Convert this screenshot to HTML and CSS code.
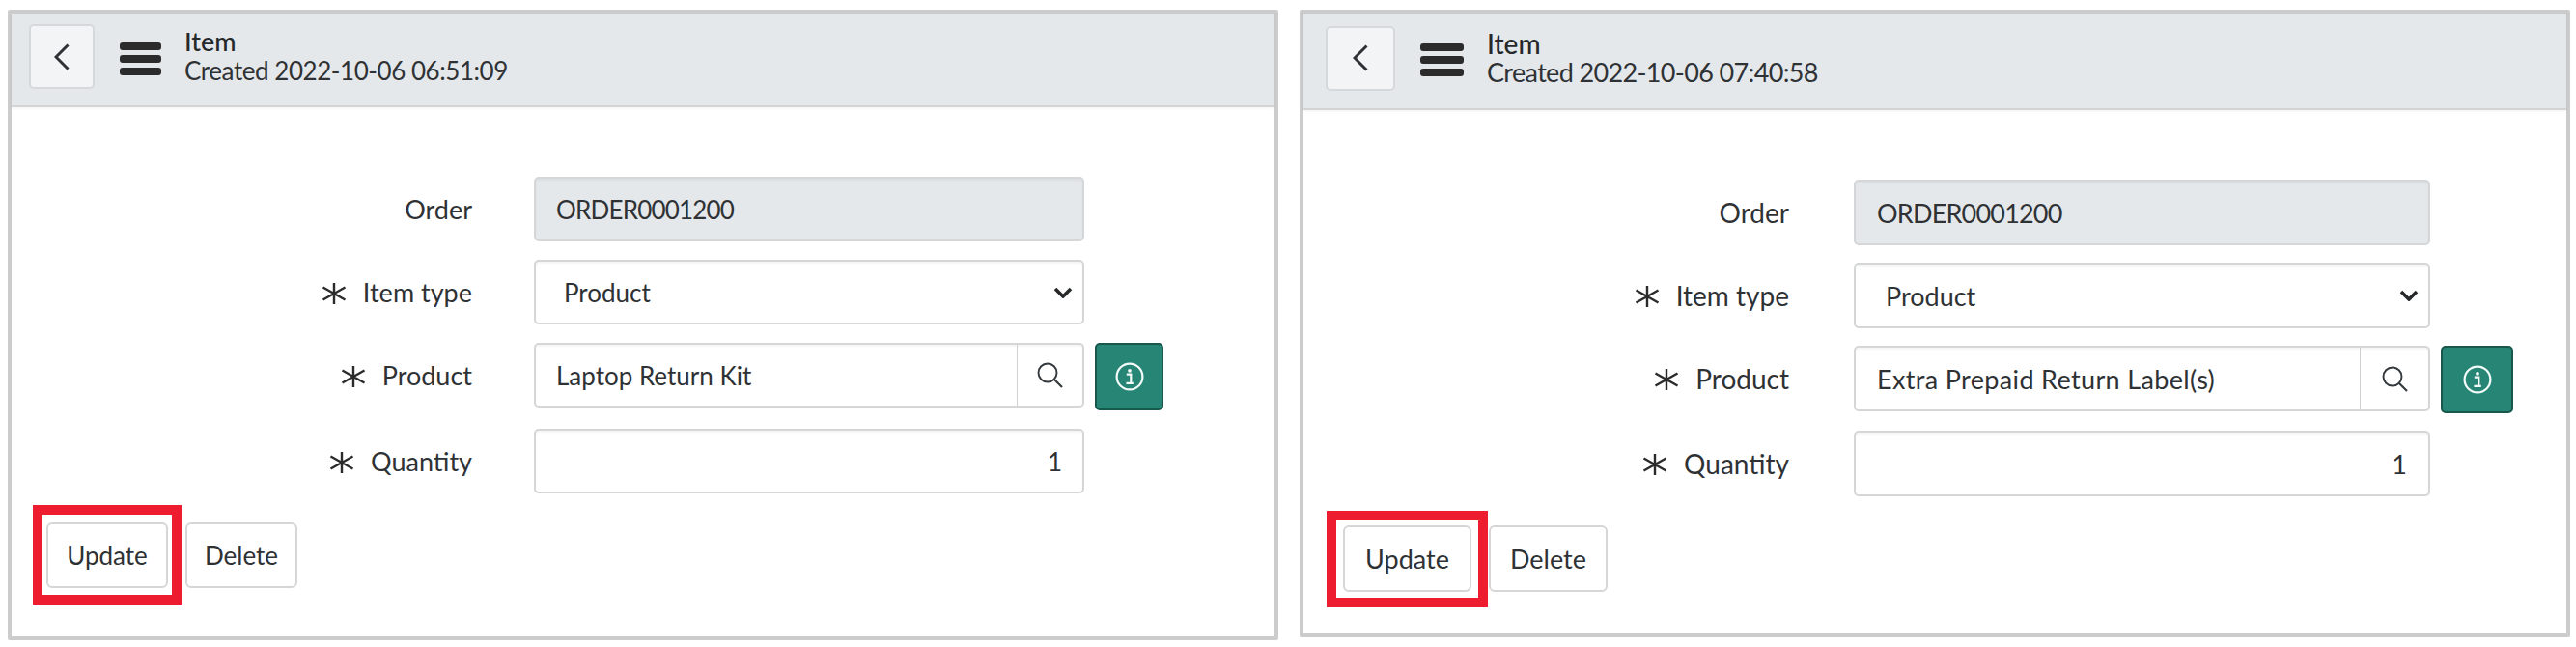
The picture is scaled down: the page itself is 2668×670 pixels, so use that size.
FILE: index.html
```html
<!DOCTYPE html>
<html lang="en">
<head>
    <meta charset="UTF-8">
    <meta name="viewport" content="width=device-width, initial-scale=1.0">
    <title>Item</title>
    <link rel="stylesheet" href="styles.css">
</head>
<body>
    <svg class="icon-defs" aria-hidden="true">
        <symbol id="i-back" viewBox="0 0 16 28"><path d="M14.5 1.5 2 14l12.5 12.5" fill="none" stroke="currentColor" stroke-width="3"/></symbol>
        <symbol id="i-star" viewBox="0 0 26 22"><path d="M13 0v22M1.5 4.5l23 13M24.5 4.5l-23 13" fill="none" stroke="currentColor" stroke-width="2.4"/></symbol>
        <symbol id="i-chevron" viewBox="0 0 20 12"><path d="M2 2l8 8 8-8" fill="none" stroke="currentColor" stroke-width="3.6"/></symbol>
        <symbol id="i-search" viewBox="0 0 27 27"><circle cx="11" cy="11" r="9.5" fill="none" stroke="currentColor" stroke-width="1.9"/><path d="M18 18l8 8" fill="none" stroke="currentColor" stroke-width="2.2"/></symbol>
        <symbol id="i-info" viewBox="0 0 30 30"><circle cx="15" cy="15" r="13.4" fill="none" stroke="currentColor" stroke-width="2.2"/><circle cx="15" cy="8.8" r="1.9" fill="currentColor"/><path d="M11.8 12.6h4.5v9.2h2.4M11.4 21.8h7.4" fill="none" stroke="currentColor" stroke-width="2.2"/></symbol>
    </svg>

    <div class="panel panel-a">
        <div class="panel-head">
            <button class="back-btn"><svg class="back-icon"><use href="#i-back"/></svg></button>
            <div class="menu-bars"><span></span><span></span><span></span></div>
            <div class="head-text">
                <div class="head-title">Item</div>
                <div class="head-date">Created 2022-10-06 06:51:09</div>
            </div>
        </div>
        <div class="form">
            <div class="form-row">
                <div class="form-label">Order</div>
                <div class="field field-readonly">ORDER0001200</div>
            </div>
            <div class="form-row">
                <div class="form-label"><svg class="star"><use href="#i-star"/></svg>Item type</div>
                <div class="field field-select">Product<svg class="chevron"><use href="#i-chevron"/></svg></div>
            </div>
            <div class="form-row">
                <div class="form-label"><svg class="star"><use href="#i-star"/></svg>Product</div>
                <div class="field field-lookup">
                    <div class="lookup-value">Laptop Return Kit</div>
                    <div class="lookup-btn"><svg class="search-icon"><use href="#i-search"/></svg></div>
                </div>
                <button class="info-btn"><svg class="info-icon"><use href="#i-info"/></svg></button>
            </div>
            <div class="form-row">
                <div class="form-label"><svg class="star"><use href="#i-star"/></svg>Quantity</div>
                <div class="field field-number">1</div>
            </div>
        </div>
        <div class="actions">
            <button class="action-btn action-marked">Update</button>
            <button class="action-btn">Delete</button>
        </div>
    </div>

    <div class="panel panel-b">
        <div class="panel-head">
            <button class="back-btn"><svg class="back-icon"><use href="#i-back"/></svg></button>
            <div class="menu-bars"><span></span><span></span><span></span></div>
            <div class="head-text">
                <div class="head-title">Item</div>
                <div class="head-date">Created 2022-10-06 07:40:58</div>
            </div>
        </div>
        <div class="form">
            <div class="form-row">
                <div class="form-label">Order</div>
                <div class="field field-readonly">ORDER0001200</div>
            </div>
            <div class="form-row">
                <div class="form-label"><svg class="star"><use href="#i-star"/></svg>Item type</div>
                <div class="field field-select">Product<svg class="chevron"><use href="#i-chevron"/></svg></div>
            </div>
            <div class="form-row">
                <div class="form-label"><svg class="star"><use href="#i-star"/></svg>Product</div>
                <div class="field field-lookup">
                    <div class="lookup-value">Extra Prepaid Return Label(s)</div>
                    <div class="lookup-btn"><svg class="search-icon"><use href="#i-search"/></svg></div>
                </div>
                <button class="info-btn"><svg class="info-icon"><use href="#i-info"/></svg></button>
            </div>
            <div class="form-row">
                <div class="form-label"><svg class="star"><use href="#i-star"/></svg>Quantity</div>
                <div class="field field-number">1</div>
            </div>
        </div>
        <div class="actions">
            <button class="action-btn action-marked">Update</button>
            <button class="action-btn">Delete</button>
        </div>
    </div>
</body>
</html>
```

FILE: styles.css
```css
body {
    margin: 0;
    padding: 10px 0 0 8px;
    background: #fff;
    color: #2f3235;
    font-family: "Lato", "Liberation Sans", sans-serif;
    display: flex;
    gap: 22px;
    align-items: flex-start;
}
.icon-defs {
    display: none;
}

/* the two captures are not at quite the same scale */
.panel-a {
    --font: 27px;
    --text: 26px;
    --date-space: -0.45px;
    --lookup-space: 0;
    --height: 653px;
    --head: 97px;
    --head-pad: 18px;
    --back-w: 68px;
    --back-h: 67px;
    --bars: 43px;
    --label-w: 477px;
    --label-gap: 64px;
    --field-w: 570px;
    --field-h: 67px;
    --row-gap: 19px;
    --info-w: 71px;
    --info-h: 70px;
    --lookup-w: 68px;
    --text-pad: 21px;
    --select-pad: 29px;
    --btn-h: 68px;
    --update-w: 126px;
    --delete-w: 116px;
    --actions-pad: 36px;
    --frame-x: 14px;
    --frame-t: 18px;
    --frame-b: 17px;
}
.panel-b {
    --font: 28px;
    --text: 27px;
    --date-space: -0.65px;
    --lookup-space: 0.35px;
    --height: 650px;
    --head: 100px;
    --head-pad: 23px;
    --back-w: 72px;
    --back-h: 67px;
    --bars: 45px;
    --label-w: 503px;
    --label-gap: 67px;
    --field-w: 597px;
    --field-h: 68px;
    --row-gap: 18px;
    --info-w: 75px;
    --info-h: 70px;
    --lookup-w: 71px;
    --text-pad: 22px;
    --select-pad: 31px;
    --btn-h: 69px;
    --update-w: 133px;
    --delete-w: 123px;
    --actions-pad: 41px;
    --frame-x: 17px;
    --frame-t: 15px;
    --frame-b: 16px;
}

.panel {
    box-sizing: border-box;
    width: 1316px;
    height: var(--height);
    border: 4px solid #cdcccd;
    font-size: var(--font);
    border-radius: 2px;
}
.panel-head {
    box-sizing: border-box;
    height: var(--head);
    display: flex;
    align-items: center;
    padding-left: var(--head-pad);
    background: #e5e8eb;
    border-bottom: 2px solid #d2d4d6;
    box-shadow: 0 1px 3px rgba(0, 0, 0, 0.06);
}
.back-btn {
    box-sizing: border-box;
    width: var(--back-w);
    height: var(--back-h);
    margin-bottom: 6px;
    padding: 0;
    display: flex;
    align-items: center;
    justify-content: center;
    background: #f2f4f6;
    border: 2px solid #d6d9dc;
    border-radius: 5px;
    color: #2f3235;
}
.back-icon {
    width: 16px;
    height: 28px;
}
.menu-bars {
    width: var(--bars);
    margin-left: 26px;
    margin-bottom: 2px;
    display: flex;
    flex-direction: column;
    gap: 5px;
}
.menu-bars span {
    height: 8px;
    background: #2b2b2b;
    border-radius: 3px;
}
.head-text {
    margin-left: 24px;
    margin-bottom: 7px;
    line-height: 30px;
    white-space: nowrap;
}
.head-title {
    color: #26282a;
    font-weight: 500;
}
.head-date {
    font-size: var(--text);
    letter-spacing: var(--date-space);
}

.form {
    padding-top: 72px;
    display: flex;
    flex-direction: column;
    gap: var(--row-gap);
}
.form-row {
    display: flex;
    align-items: flex-start;
}
.form-label {
    box-sizing: border-box;
    width: var(--label-w);
    height: var(--field-h);
    margin-right: var(--label-gap);
    display: flex;
    align-items: center;
    justify-content: flex-end;
}
.star {
    width: 26px;
    height: 22px;
    margin-right: 17px;
    margin-top: 2px;
    color: #2b2b2b;
}
.field {
    box-sizing: border-box;
    width: var(--field-w);
    height: var(--field-h);
    display: flex;
    align-items: center;
    padding: 0 var(--text-pad);
    background: #fff;
    border: 2px solid #d5d6d7;
    border-radius: 5px;
    box-shadow: inset 0 2px 2px rgba(0, 0, 0, 0.04);
    font-size: var(--text);
}
.field-readonly {
    background: #e5e8eb;
    letter-spacing: -0.8px;
}
.field-select {
    justify-content: space-between;
    padding: 0 10px 0 var(--select-pad);
}
.chevron {
    width: 20px;
    height: 12px;
    color: #26282a;
}
.field-lookup {
    padding: 0;
}
.lookup-value {
    flex: 1;
    padding-left: var(--text-pad);
    letter-spacing: var(--lookup-space);
}
.lookup-btn {
    box-sizing: border-box;
    width: var(--lookup-w);
    height: 100%;
    display: flex;
    align-items: center;
    justify-content: center;
    border-left: 1px solid #cfd0d1;
}
.search-icon {
    width: 27px;
    height: 27px;
    color: #33383c;
}
.field-number {
    justify-content: flex-end;
}
.info-btn {
    box-sizing: border-box;
    width: var(--info-w);
    height: var(--info-h);
    margin-left: 11px;
    padding: 0;
    display: flex;
    align-items: center;
    justify-content: center;
    background: #278575;
    border: 2px solid #17574c;
    border-radius: 5px;
    color: #f2fbf8;
}
.info-icon {
    width: 30px;
    height: 30px;
}

.actions {
    display: flex;
    gap: 18px;
    margin-top: 30px;
    padding-left: var(--actions-pad);
}
.action-btn {
    box-sizing: border-box;
    width: var(--delete-w);
    height: var(--btn-h);
    padding: 0;
    background: #fff;
    border: 2px solid #d5d6d7;
    border-radius: 6px;
    color: #2f3235;
    font-family: inherit;
    font-size: var(--text);
}
.action-marked {
    position: relative;
    width: var(--update-w);
}
/* red annotation box around Update */
.action-marked::after {
    content: "";
    position: absolute;
    top: calc(-2px - var(--frame-t));
    bottom: calc(-2px - var(--frame-b));
    left: calc(-2px - var(--frame-x));
    right: calc(-2px - var(--frame-x));
    border: 10px solid #ed1c2e;
}
```
